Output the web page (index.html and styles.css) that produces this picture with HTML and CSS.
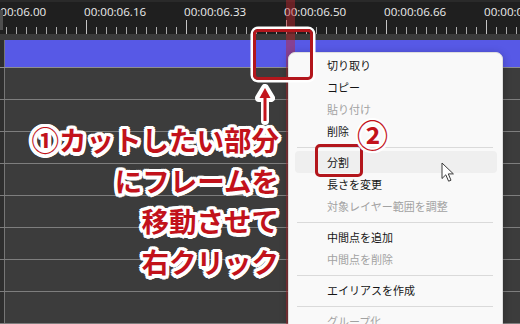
FILE: index.html
```html
<!DOCTYPE html>
<html lang="ja">
<head>
<meta charset="utf-8">
<title>Timeline</title>
<link rel="stylesheet" href="styles.css">
</head>
<body>
<div class="screen">
  <div class="ruler">
    <div class="handle"></div>
    <div class="labels">
      <span class="label">00:00:06.00</span>
      <span class="label">00:00:06.16</span>
      <span class="label">00:00:06.33</span>
      <span class="label">00:00:06.50</span>
      <span class="label">00:00:06.66</span>
      <span class="label">00:00:06.83</span>
    </div>
  </div>
  <div class="gap"></div>
  <div class="tracks">
    <div class="row clip"></div>
    <div class="row"></div>
    <div class="row"></div>
    <div class="row"></div>
    <div class="row"></div>
    <div class="row"></div>
    <div class="row"></div>
    <div class="row"></div>
    <div class="row"></div>
  </div>

  <div class="playhead"></div>

  <div class="menu">
    <div class="item">切り取り</div>
    <div class="item">コピー</div>
    <div class="item disabled">貼り付け</div>
    <div class="item">削除</div>
    <div class="sep"></div>
    <div class="item hover">分割</div>
    <div class="item">長さを変更</div>
    <div class="item disabled">対象レイヤー範囲を調整</div>
    <div class="sep"></div>
    <div class="item">中間点を追加</div>
    <div class="item disabled">中間点を削除</div>
    <div class="sep"></div>
    <div class="item">エイリアスを作成</div>
    <div class="sep"></div>
    <div class="item disabled">グループ化</div>
  </div>

  <div class="box box-clip"></div>
  <div class="box box-split"></div>

  <svg class="arrow" width="20" height="42" viewBox="0 0 20 42">
    <g fill="none" stroke="#fff" stroke-width="8" stroke-linejoin="round" stroke-linecap="round">
      <path d="M10 6 L10 37"/>
      <path d="M4 14 L10 4 L16 14 Z" fill="#fff"/>
    </g>
    <path d="M10 8 L10 37" stroke="#c3141c" stroke-width="3"/>
    <path d="M4.5 14 L10 4 L15.5 14 Z" fill="#c3141c"/>
  </svg>

  <div class="note">①カットしたい部分<br>にフレームを<br>移動させて<br>右クリック</div>
  <div class="num2">②</div>

  <svg class="cursor" width="14" height="21" viewBox="0 0 14 21">
    <path d="M1 1 L1 16.5 L4.8 12.8 L7.6 19.2 L10 18.2 L7.3 11.9 L12.4 11.9 Z" fill="#fff" stroke="#3a3a3a" stroke-width="1" stroke-linejoin="round"/>
  </svg>
</div>
</body>
</html>
```

FILE: styles.css
```css
* { box-sizing: border-box; }
html, body { margin: 0; padding: 0; }
body { width: 520px; height: 324px; overflow: hidden; background: #3c3c3c; }

.screen {
  position: relative;
  width: 520px;
  height: 324px;
  overflow: hidden;
  display: flex;
  flex-direction: column;
}

.ruler {
  position: relative;
  height: 34px;
  flex: 0 0 34px;
  background-color: #1f1f1f;
  border-top: 2px solid #2a2a2a;
  background-image:
    repeating-linear-gradient(90deg, #c4c4c4 0 1px, transparent 1px 100px),
    repeating-linear-gradient(90deg, #a8a8a8 0 1px, transparent 1px 10px);
  background-size: 100% 14px, 100% 7px;
  background-position: 86px 18px, 6px 25px;
  background-repeat: no-repeat;
  overflow: hidden;
}

.handle {
  position: absolute;
  left: 0;
  top: 8px;
  width: 3px;
  height: 20px;
  background: #4e4e4e;
  z-index: 1;
}

.labels {
  display: flex;
  margin-left: -16px;
  padding-top: 2px;
}
.label {
  flex: 0 0 100px;
  font-family: "Open Sans", "Noto Sans", sans-serif;
  font-size: 11.6px;
  line-height: 15px;
  color: #ececec;
  white-space: nowrap;
}

.gap {
  flex: 0 0 6px;
  background: #3a3a3a;
}

.tracks {
  flex: 1;
  background: linear-gradient(to right, #2e2e2e 0 4px, #767676 4px 5px, #3c3c3c 5px);
}
.row {
  height: 32px;
  border-bottom: 1px solid #7e7e7e;
}
.row.clip {
  height: 28px;
  background: linear-gradient(to right, transparent 5px, #5759e6 5px);
  border-bottom-color: #8e8e8e;
}

.playhead {
  position: absolute;
  left: 286px;
  top: 0;
  width: 9px;
  height: 324px;
  background: rgba(196, 36, 44, 0.45);
}

.menu {
  position: absolute;
  left: 288px;
  top: 52px;
  width: 215px;
  height: 300px;
  padding-top: 1px;
  background: #f9f9f9;
  border: 1px solid #dedede;
  border-radius: 7px;
  box-shadow: 0 2px 8px rgba(0, 0, 0, 0.25);
  font-family: "Noto Sans CJK JP", "Noto Sans", sans-serif;
  font-size: 11px;
  color: #151515;
}
.item {
  height: 22px;
  line-height: 22px;
  margin: 0 5px 0 6px;
  padding-left: 32px;
  border-radius: 4px;
  white-space: nowrap;
}
.item.disabled { color: #a2a2a2; }
.item.hover { background: #efefef; }
.sep {
  height: 9px;
  padding-top: 5px;
}
.sep::before {
  content: "";
  display: block;
  height: 1px;
  margin: 0 9px 0 8px;
  background: #dadada;
}

.box {
  position: absolute;
  border: 3px solid #b3161c;
  border-radius: 5px;
  box-shadow: 0 0 0 2.5px #ffffff;
}
.box-clip { left: 253px; top: 29px; width: 60px; height: 51px; }
.box-split { left: 315px; top: 144px; width: 48px; height: 33px; box-shadow: none; }

.arrow {
  position: absolute;
  left: 255px;
  top: 84px;
}

.note {
  position: absolute;
  left: 0;
  top: 119px;
  width: 279px;
  text-align: right;
  font-family: "Noto Sans CJK JP", sans-serif;
  font-weight: 700;
  font-size: 27.5px;
  line-height: 40.6px;
  color: #c2121b;
  white-space: nowrap;
  text-shadow:
    2px 0 0 #fff, -2px 0 0 #fff, 0 2px 0 #fff, 0 -2px 0 #fff,
    1.5px 1.5px 0 #fff, -1.5px 1.5px 0 #fff, 1.5px -1.5px 0 #fff, -1.5px -1.5px 0 #fff,
    3.5px 0 0 #fff, -3.5px 0 0 #fff, 0 3.5px 0 #fff, 0 -3.5px 0 #fff,
    3px 1.7px 0 #fff, -3px 1.7px 0 #fff, 3px -1.7px 0 #fff, -3px -1.7px 0 #fff,
    1.7px 3px 0 #fff, -1.7px 3px 0 #fff, 1.7px -3px 0 #fff, -1.7px -3px 0 #fff,
    2.5px 2.5px 0 #fff, -2.5px 2.5px 0 #fff, 2.5px -2.5px 0 #fff, -2.5px -2.5px 0 #fff;
}

.num2 {
  position: absolute;
  left: 357px;
  top: 114px;
  font-family: "Noto Sans CJK JP", sans-serif;
  font-weight: 700;
  font-size: 31px;
  line-height: 40px;
  color: #c2121b;
  text-shadow:
    2px 0 0 #fff, -2px 0 0 #fff, 0 2px 0 #fff, 0 -2px 0 #fff,
    1.5px 1.5px 0 #fff, -1.5px 1.5px 0 #fff, 1.5px -1.5px 0 #fff, -1.5px -1.5px 0 #fff;
}

.cursor {
  position: absolute;
  left: 441px;
  top: 162px;
}
```
